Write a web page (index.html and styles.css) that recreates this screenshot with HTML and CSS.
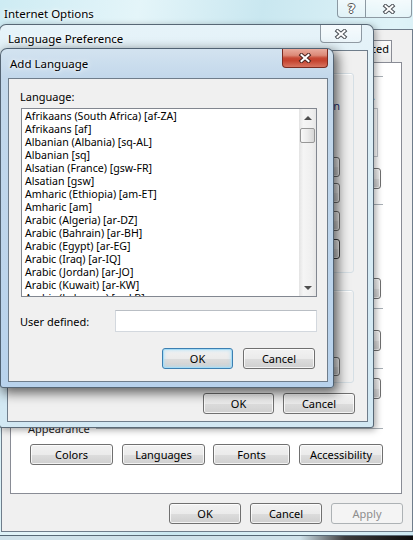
FILE: index.html
```html
<!DOCTYPE html>
<html lang="en">
<head>
<meta charset="utf-8">
<title>Internet Options</title>
<link rel="stylesheet" href="styles.css">
</head>
<body>

<section class="win win-main">
  <div class="titlebar tb-main">
    <span class="title">Internet Options</span>
    <div class="caps">
      <span class="cap cap-help">?</span>
      <span class="cap cap-close">
        <svg width="14" height="10" viewBox="0 0 14 10"><path d="M3.5 2 L10.5 8 M10.5 2 L3.5 8" stroke="#4a4f55" stroke-width="4" stroke-linecap="square" fill="none"/><path d="M3.5 2 L10.5 8 M10.5 2 L3.5 8" stroke="#ffffff" stroke-width="2" stroke-linecap="square" fill="none"/></svg>
      </span>
    </div>
  </div>
  <div class="client main-client">
    <div class="tabs">
      <span class="tab">Advanced</span>
    </div>
    <div class="panel">
      <div class="sect"><i class="rule"></i></div>
      <div class="hint">line.</div>
      <div class="homebox"></div>
      <div class="brow">
        <span class="btn w75"></span>
        <span class="btn w75"></span>
        <span class="btn w75"></span>
      </div>
      <div class="sect s2"><i class="rule"></i></div>
      <div class="filler"></div>
      <div class="brow b2">
        <span class="btn w75"></span>
        <span class="btn w75"></span>
      </div>
      <div class="sect s3"><i class="rule"></i></div>
      <div class="brow b3">
        <span class="btn w75"></span>
      </div>
      <div class="sect s4"><i class="rule"></i></div>
      <div class="brow b4">
        <span class="btn w75"></span>
      </div>
      <div class="sect s5"><span>Appearance</span><i class="rule"></i></div>
      <div class="arow">
        <button class="btn w83">Colors</button>
        <button class="btn w83 gap8">Languages</button>
        <button class="btn w77">Fonts</button>
        <button class="btn w84">Accessibility</button>
      </div>
    </div>
    <div class="footer main-footer">
      <button class="btn w72">OK</button>
      <button class="btn w72">Cancel</button>
      <button class="btn w72 btn-dis">Apply</button>
    </div>
  </div>
</section>

<section class="win win-pref">
  <div class="titlebar tb-pref">
    <span class="title">Language Preference</span>
    <span class="cap cap-solo">
      <svg width="14" height="10" viewBox="0 0 14 10"><path d="M3.5 2 L10.5 8 M10.5 2 L3.5 8" stroke="#4a4f55" stroke-width="4" stroke-linecap="square" fill="none"/><path d="M3.5 2 L10.5 8 M10.5 2 L3.5 8" stroke="#ffffff" stroke-width="2" stroke-linecap="square" fill="none"/></svg>
    </span>
  </div>
  <div class="client pref-client">
    <div class="gbox g1">
      <div class="gtext">in</div>
      <div class="lrow">
        <div class="plist"></div>
        <div class="pbtns">
          <span class="btn pb"></span>
          <span class="btn pb pb2"></span>
          <span class="btn pb pb3"></span>
          <span class="btn pb pb3 pdef"></span>
        </div>
      </div>
    </div>
    <div class="gbox g2">
      <span class="btn pb suffix"></span>
    </div>
    <div class="footer pref-footer">
      <button class="btn w71">OK</button>
      <button class="btn w72">Cancel</button>
    </div>
  </div>
</section>

<section class="win win-add">
  <div class="titlebar tb-add">
    <span class="title">Add Language</span>
    <span class="cap cap-red">
      <svg width="14" height="10" viewBox="0 0 14 10"><path d="M3.5 2 L10.5 8 M10.5 2 L3.5 8" stroke="#4a2420" stroke-width="4" stroke-linecap="square" fill="none"/><path d="M3.5 2 L10.5 8 M10.5 2 L3.5 8" stroke="#ffffff" stroke-width="2" stroke-linecap="square" fill="none"/></svg>
    </span>
  </div>
  <div class="client add-client">
    <div class="lbl">Language:</div>
    <div class="lb">
      <div class="lb-items">
        <div>Afrikaans (South Africa) [af-ZA]</div>
        <div>Afrikaans [af]</div>
        <div>Albanian (Albania) [sq-AL]</div>
        <div>Albanian [sq]</div>
        <div>Alsatian (France) [gsw-FR]</div>
        <div>Alsatian [gsw]</div>
        <div>Amharic (Ethiopia) [am-ET]</div>
        <div>Amharic [am]</div>
        <div>Arabic (Algeria) [ar-DZ]</div>
        <div>Arabic (Bahrain) [ar-BH]</div>
        <div>Arabic (Egypt) [ar-EG]</div>
        <div>Arabic (Iraq) [ar-IQ]</div>
        <div>Arabic (Jordan) [ar-JO]</div>
        <div>Arabic (Kuwait) [ar-KW]</div>
        <div>Arabic (Lebanon) [ar-LB]</div>
      </div>
      <div class="sb">
        <div class="sb-btn"><i class="tri-up"></i></div>
        <div class="thumb"></div>
        <div class="track"></div>
        <div class="sb-btn"><i class="tri-dn"></i></div>
      </div>
    </div>
    <div class="urow">
      <span class="ulbl">User defined:</span>
      <div class="tbox"></div>
    </div>
    <div class="footer add-footer">
      <button class="btn w71 btn-def">OK</button>
      <button class="btn w72">Cancel</button>
    </div>
  </div>
</section>

</body>
</html>
```

FILE: styles.css
```css
* { box-sizing: border-box; }
html, body { margin: 0; padding: 0; }
body {
  width: 413px;
  height: 540px;
  overflow: hidden;
  position: relative;
  background: linear-gradient(to right, #cfe2ea 0, #cfe2ea 300px, #3c3c3c 345px, #0c0c0c 413px);
  font-family: "Noto Sans", "Open Sans", "DejaVu Sans", sans-serif;
  font-size: 11px;
  color: #000;
}

/* ---------- windows ---------- */
.win {
  position: absolute;
  display: flex;
  flex-direction: column;
  border: 1px solid rgba(45, 60, 75, 0.75);
  border-radius: 7px 7px 3px 3px;
}
.win-main {
  left: -6px; top: -1px;
  width: 426px; height: 537px;
  padding: 0 6px 3px 6px;
  background: linear-gradient(100deg, #cdebf3 0%, #e4f5f9 28%, #c9e7f0 52%, #dff3f8 78%, #cbe8f1 100%);
}
.win-pref {
  left: -1px; top: 24px;
  width: 375px; height: 404px;
  padding: 0 5px 5px 7px;
  background: linear-gradient(to bottom, #e6f3f9 0, #d8ecf5 40%, #d2e8f3 100%);
  box-shadow: 2px 2px 7px rgba(0, 0, 0, 0.35);
}
.win-add {
  left: 0; top: 48px;
  width: 334px; height: 340px;
  padding: 0 5px 5px 7px;
  background: linear-gradient(to bottom, #d3e3f0 0, #c3d8eb 28px, #b8d2ec 100%);
  box-shadow: 3px 4px 12px 1px rgba(0, 0, 0, 0.6);
}

.titlebar { display: flex; align-items: flex-start; flex: none; }
.title { flex: 1; font-size: 11.5px; line-height: 16px; text-shadow: 0 0 6px #fff, 0 0 3px #fff; }
.tb-main { height: 29px; }
.tb-main .title { padding: 6px 0 0 3px; }
.tb-pref { height: 25px; }
.tb-pref .title { padding: 6px 0 0 1px; }
.tb-add { height: 29px; }
.tb-add .title { padding: 7px 0 0 2px; }

.caps { display: flex; margin-right: 1px; }
.cap {
  height: 18px;
  display: flex; align-items: center; justify-content: center;
  border: 1px solid rgba(60, 75, 90, 0.55);
  border-top: none;
  background: linear-gradient(to bottom, rgba(255,255,255,0.65), rgba(255,255,255,0.25));
}
.cap-help {
  width: 28px; border-right: none; border-radius: 0 0 0 4px;
  font-family: "DejaVu Sans", sans-serif; font-weight: bold; font-size: 13px; color: #fff;
  text-shadow: 1px 0 0 #555, -1px 0 0 #555, 0 1px 0 #555, 0 -1px 0 #555;
}
.cap-close { width: 47px; border-radius: 0 0 4px 0; }
.cap-solo { width: 42px; margin-right: 6px; border-radius: 0 0 4px 4px; }
.cap-red {
  width: 46px; height: 19px;
  border-color: #7a2c22;
  border-radius: 0 0 4px 4px;
  background: linear-gradient(to bottom, #e9ab9d 0%, #dc8a78 35%, #c74a36 50%, #c5432f 65%, #d87461 100%);
}

/* ---------- client areas ---------- */
.client {
  flex: none;
  display: flex;
  flex-direction: column;
  border: 1px solid #6f7d8b;
  background: #f0f0f0;
}
.main-client { height: 503px; }
.pref-client { height: 372px; }
.add-client { height: 304px; }

/* ---------- buttons ---------- */
.btn {
  display: block;
  font-family: inherit;
  font-size: 11px;
  color: #000;
  margin: 0;
  padding: 0;
  height: 21px;
  border: 1px solid #707070;
  border-radius: 3px;
  background: linear-gradient(to bottom, #f2f2f2 0%, #ebebeb 50%, #dddddd 51%, #cfcfcf 100%);
  box-shadow: inset 0 0 0 1px rgba(255, 255, 255, 0.75);
  line-height: 19px;
  text-align: center;
  flex: none;
}
.btn-dis { border-color: #adb2b5; background: #f4f4f4; color: #8d8d8d; box-shadow: none; }
.btn-def {
  border-color: #3c7fb1;
  box-shadow: inset 0 0 0 1px #a6dcf6, inset 0 0 3px 2px rgba(170, 222, 248, 0.55);
}
.w71 { width: 71px; }
.w72 { width: 72px; }
.w75 { width: 75px; }
.w77 { width: 77px; }
.w83 { width: 83px; }
.w84 { width: 84px; }

.footer { display: flex; justify-content: flex-end; flex: none; }
.main-footer { margin-top: 9px; padding-right: 9px; gap: 9px; }
.pref-footer { margin-top: 10px; padding-right: 12px; gap: 9px; height: 21px; }
.add-footer { margin-top: 16px; padding-right: 12px; gap: 10px; }

/* ---------- main window: tabs + General page ---------- */
.tabs {
  height: 32px;
  flex: none;
  display: flex;
  justify-content: flex-end;
  align-items: flex-end;
  padding-right: 20px;
}
.tab {
  height: 22px;
  padding: 0 2px 0 6px;
  border: 1px solid #898c95;
  border-bottom: none;
  background: linear-gradient(to bottom, #fcfcfc, #eaeaea);
  line-height: 15px;
  white-space: nowrap;
}
.panel {
  flex: none;
  height: 432px;
  margin: 0 10px 0 8px;
  padding: 0 18px 0 17px;
  border: 1px solid #898c95;
  background: #ffffff;
  display: flex;
  flex-direction: column;
  overflow: hidden;
}
.sect { display: flex; align-items: center; height: 14px; margin-top: 6px; flex: none; color: #1e1e1e; }
.sect .rule { flex: 1; height: 1px; margin-left: 6px; background: #a9b0b6; }
.hint { margin-top: 7px; height: 12px; line-height: 12px; text-align: right; padding-right: 8px; white-space: nowrap; color: #1e1e1e; }
.homebox { margin: 6px 5px 0 40px; height: 49px; border: 1px solid #c3c7cc; background: #fff; flex: none; }
.brow { display: flex; justify-content: flex-end; gap: 8px; padding-right: 2px; margin-top: 11px; flex: none; }
.filler { height: 67px; flex: none; }
.sect.s2 { margin-top: 8px; }
.brow.b2 { margin-top: 0; }
.sect.s3 { margin-top: 2px; }
.brow.b3 { margin-top: 15px; }
.sect.s4 { margin-top: 10px; }
.brow.b4 { margin-top: 3px; }
.sect.s5 { margin-top: 22px; }
.arow { display: flex; gap: 9px; margin-top: 9px; padding-left: 2px; flex: none; }
.arow .gap8 { margin-right: -1px; }

/* ---------- Language Preference ---------- */
.gbox {
  flex: none;
  margin: 22px 13px 0 12px;
  border: 1px solid #d5dfe5;
  border-radius: 3px;
  box-shadow: inset 1px 1px 0 #fff;
  display: flex;
  flex-direction: column;
  padding: 0 13px 0 10px;
}
.g1 { height: 200px; }
.g2 { height: 93px; margin-top: 17px; align-items: flex-end; }
.gtext { margin-top: 25px; line-height: 13px; height: 13px; text-align: right; white-space: nowrap; color: #1c2f74; }
.lrow { display: flex; margin-top: 45px; gap: 8px; }
.plist { flex: 1; height: 100px; border: 1px solid #828790; background: #fff; }
.pbtns { display: flex; flex-direction: column; }
.pb { width: 75px; height: 20px; }
.pb2 { margin-top: 6px; }
.pb3 { margin-top: 8px; }
.pdef { border-color: #3b3b3b; }
.suffix { margin-top: 66px; height: 19px; }

/* ---------- Add Language ---------- */
.lbl { margin-top: 11px; padding-left: 11px; line-height: 14px; height: 14px; flex: none; }
.lb {
  flex: none;
  display: flex;
  height: 189px;
  margin: 4px 10px 0 12px;
  border: 1px solid #828790;
  background: #fff;
}
.lb-items {
  flex: 1;
  overflow: hidden;
  padding: 1px 0 0 3px;
  font-size: 10.6px;
  line-height: 13px;
  white-space: nowrap;
}
.sb {
  width: 17px;
  flex: none;
  display: flex;
  flex-direction: column;
  background: linear-gradient(to right, #e3e3e3 0, #f5f5f5 25%, #efefef 75%, #e6e6e6 100%);
}
.sb-btn { height: 17px; display: flex; align-items: center; justify-content: center; flex: none; }
.tri-up { width: 0; height: 0; border-left: 4px solid transparent; border-right: 4px solid transparent; border-bottom: 4px solid #4e4e4e; }
.tri-dn { width: 0; height: 0; border-left: 4px solid transparent; border-right: 4px solid transparent; border-top: 4px solid #4e4e4e; }
.thumb {
  flex: none;
  height: 15px;
  margin: 2px 1px 0 1px;
  border: 1px solid #979797;
  border-radius: 2px;
  background: linear-gradient(to right, #f8f8f8 0, #ebebeb 50%, #d6d6d6 100%);
}
.track { flex: 1; }
.urow { display: flex; align-items: center; height: 22px; margin-top: 13px; flex: none; }
.ulbl { padding-left: 11px; }
.tbox { margin-left: auto; margin-right: 10px; width: 202px; height: 22px; border: 1px solid #d3d8de; border-top-color: #b9bec4; background: #fff; }
```
